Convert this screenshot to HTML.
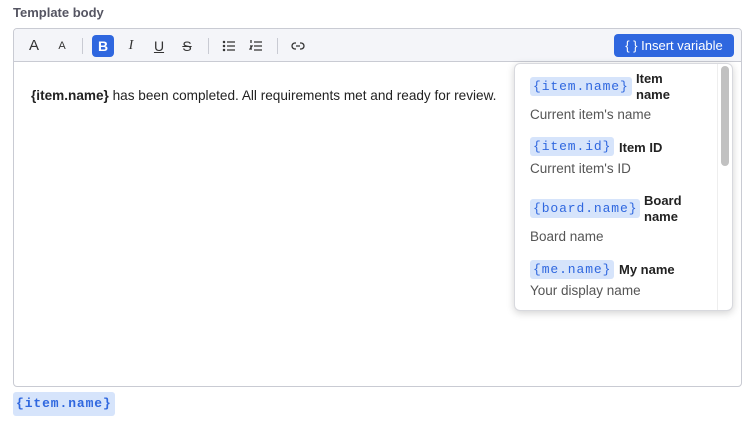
<html><head><style>
body{margin:0;width:750px;height:423px;background:#fff;font-family:"Liberation Sans",sans-serif;position:relative;overflow:hidden}
.lab{position:absolute;left:13px;top:5px;font-size:13px;font-weight:bold;color:#555562}
.ed{position:absolute;left:13px;top:28px;width:727px;height:357px;border:1px solid #c9cbd3;border-radius:4px;overflow:hidden}
.tb{height:32px;background:#f4f5f9;border-bottom:1px solid #c9cbd3;position:relative}
.ic{position:absolute;top:6px;width:22px;height:22px;font-size:14px;color:#333;text-align:center;line-height:22px}
.ic svg{margin-top:4px}
.sep{position:absolute;top:9px;width:1px;height:16px;background:#c9cbd3}
.btn{position:absolute;right:7px;top:5px;width:120px;height:23px;background:#2f67df;color:#fff;border-radius:4px;font-size:13px;line-height:23px;text-align:center}
.txt{position:absolute;left:17px;top:59px;font-size:13.6px;color:#222}
.dd{position:absolute;left:514px;top:63px;width:217px;height:246px;background:#fff;border:1px solid #d8d9de;border-radius:6px;box-shadow:0 2px 8px rgba(0,0,0,.18);overflow:hidden}
.sb{position:absolute;left:206px;top:2px;width:8px;height:100px;background:#c1c1c1;border-radius:4px}
.sbt{position:absolute;left:202px;top:0;width:1px;height:246px;background:#eee}
.chip{position:absolute;background:#d6e4fb;color:#2f67df;font-family:"Liberation Mono",monospace;font-size:13px;letter-spacing:.9px;border-radius:3px;padding:0 3px;height:19px;line-height:19px}
.t{position:absolute;font-size:13px;font-weight:bold;color:#222;line-height:16px}
.d{position:absolute;left:15px;font-size:13.5px;color:#555}
</style></head><body>
<div class="lab">Template body</div>
<div class="ed"><div class="tb">
<div class="ic" style="left:9px;font-size:15px">A</div>
<div class="ic" style="left:37px;font-size:11px">A</div>
<div class="sep" style="left:68px"></div>
<div class="ic" style="left:78px;background:#2f67df;color:#fff;border-radius:4px;font-weight:bold">B</div>
<div class="ic" style="left:106px;font-style:italic;font-family:'Liberation Serif'">I</div>
<div class="ic" style="left:134px;text-decoration:underline">U</div>
<div class="ic" style="left:162px;text-decoration:line-through">S</div>
<div class="sep" style="left:194px"></div>
<div class="ic" style="left:204px"><svg width="14" height="14" viewBox="0 0 14 14" fill="none" stroke="#333" stroke-width="1.3"><circle cx="2" cy="3" r=".6"/><circle cx="2" cy="7" r=".6"/><circle cx="2" cy="11" r=".6"/><path d="M5 3h8M5 7h8M5 11h8"/></svg></div>
<div class="ic" style="left:231px"><svg width="14" height="14" viewBox="0 0 14 14" fill="none" stroke="#333" stroke-width="1.3"><path d="M2 1v3M1 7h2l-2 3h2M5 3h8M5 7h8M5 11h8"/></svg></div>
<div class="sep" style="left:263px"></div>
<div class="ic" style="left:273px"><svg width="14" height="14" viewBox="0 0 14 14" fill="none" stroke="#333" stroke-width="1.3"><path d="M5 4H4a3 3 0 0 0 0 6h1M9 4h1a3 3 0 0 1 0 6H9M5 7h4"/></svg></div>
<div class="btn">{ } Insert variable</div>
</div>
<div class="txt"><b>{item.name}</b> has been completed. All requirements met and ready for review.</div>
</div>
<div class="dd"><div class="sbt"></div><div class="sb"></div>
<div class="chip" style="left:15px;top:13px">{item.name}</div><div class="t" style="left:121px;top:7px">Item<br>name</div><div class="d" style="top:43px">Current item's name</div>
<div class="chip" style="left:15px;top:73px">{item.id}</div><div class="t" style="left:104px;top:76px">Item ID</div><div class="d" style="top:97px">Current item's ID</div>
<div class="chip" style="left:15px;top:135px">{board.name}</div><div class="t" style="left:129px;top:129px">Board<br>name</div><div class="d" style="top:165px">Board name</div>
<div class="chip" style="left:15px;top:196px">{me.name}</div><div class="t" style="left:104px;top:198px">My name</div><div class="d" style="top:219px">Your display name</div>
</div>
<div class="chip" style="left:13px;top:392px;height:24px;line-height:24px;font-weight:bold">{item.name}</div>
</body></html>
